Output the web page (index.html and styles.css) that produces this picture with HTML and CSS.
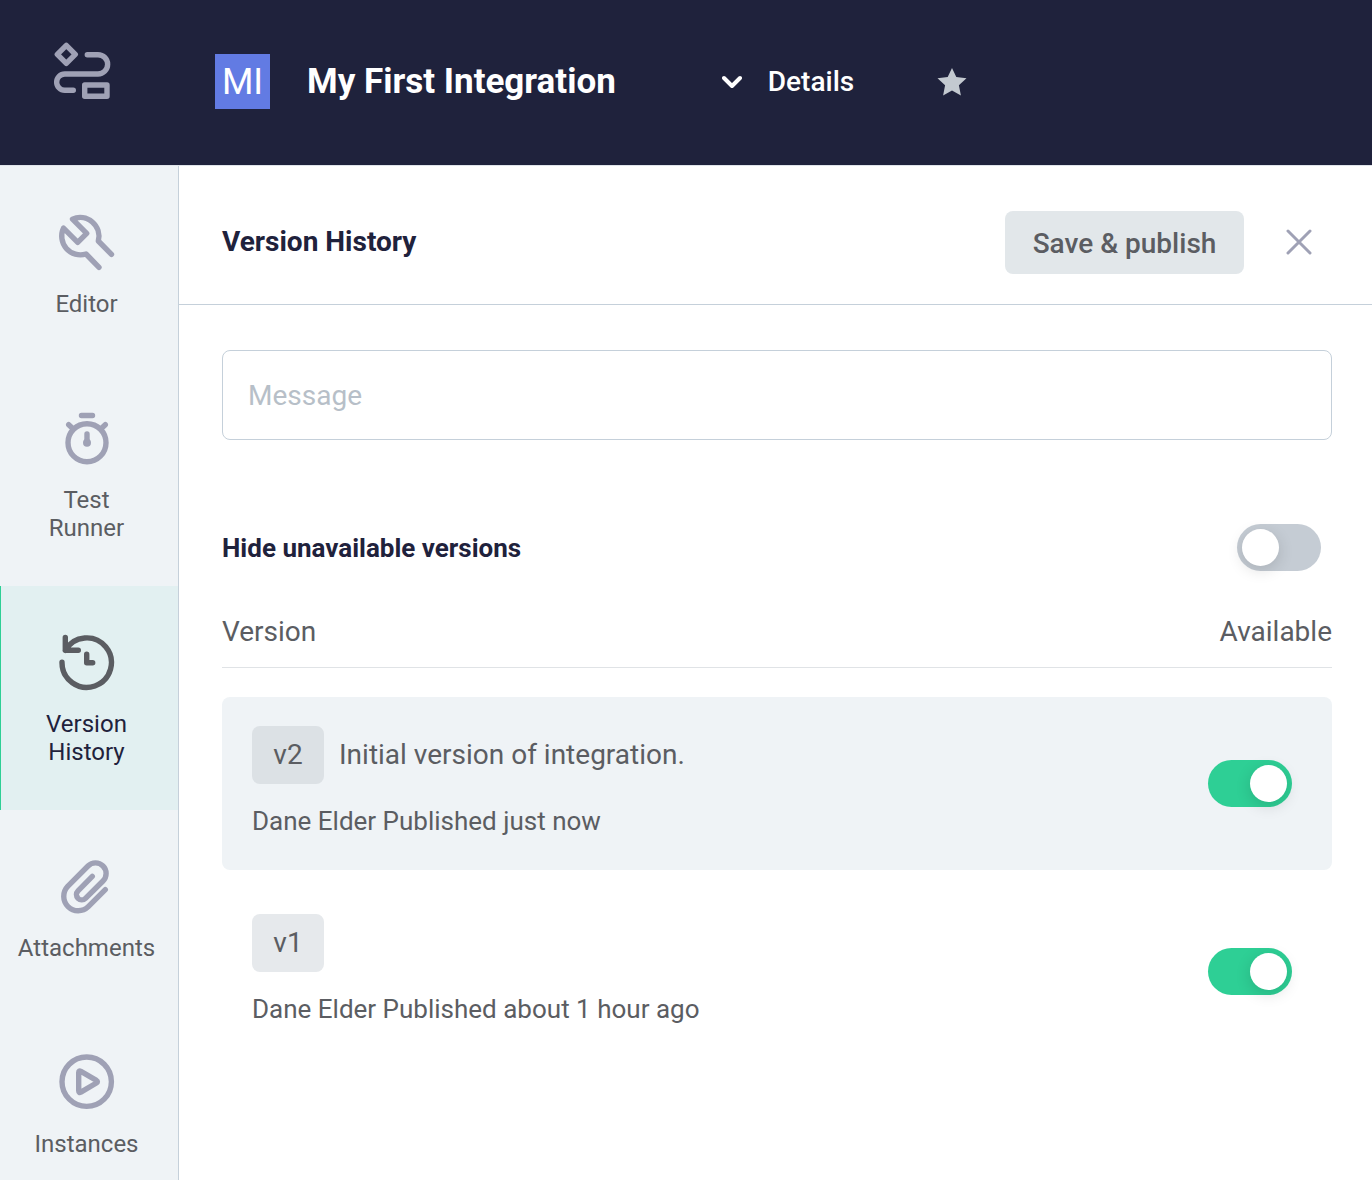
FILE: index.html
```html
<!DOCTYPE html>
<html lang="en">
<head>
<meta charset="utf-8">
<meta name="viewport" content="width=device-width, initial-scale=1">
<title>My First Integration</title>
<link rel="stylesheet" href="styles.css">
</head>
<body>
<div class="app">
  <header class="topbar">
    <a class="logo" href="#" aria-label="Home">
      <svg class="icon" viewBox="0 0 64 64"><path d="M16.3 7.3l9 9-9 9-9-9zM37.3 16.7H48a9.65 9.65 0 0 1 0 19.3H14.8a8.15 8.15 0 0 0 0 16.3h8.5M34.7 47H57v11.3H34.7z"/></svg>
    </a>
    <span class="avatar">MI</span>
    <h1 class="title">My First Integration</h1>
    <button class="details" type="button">
      <svg class="chevron" viewBox="0 0 20 14"><path d="M2 3l8 8 8-8"/></svg>
      Details
    </button>
    <button class="star" type="button" aria-label="Favorite">
      <svg class="star-icon" viewBox="0 0 30 28"><path d="M15 0l4.3 9 10.2 1.2-7.6 7 2 10.3L15 22.400l-8.900 5.100 2-10.300-7.600-7L10.700 9z"/></svg>
    </button>
  </header>

  <div class="body">
    <nav class="sidebar">
      <a class="nav-item" href="#">
        <svg class="icon" viewBox="0 0 64 64"><path d="M56.5 44.3L43.3 31A18.7 18.7 0 0 0 17.5 9.2L31.7 23.3l-9 9L8.5 18.2A18.7 18.7 0 0 0 31 44l13 13.3"/></svg>
        <span class="nav-label">Editor</span>
      </a>
      <a class="nav-item" href="#">
        <svg class="icon" viewBox="0 0 64 64"><circle cx="32" cy="36.7" r="19"/><path d="M26.5 9.5h11M13.7 18.7l3.5 3.3M50.3 18.7L46.8 22M32 28v8"/><circle class="dot" cx="32" cy="36.7" r="4"/></svg>
        <span class="nav-label">Test Runner</span>
      </a>
      <a class="nav-item active" href="#" aria-current="page">
        <svg class="icon" viewBox="0 0 64 64"><path d="M7 32.3A24.7 24.7 0 1 0 10.3 20.3M10.3 7.5v12.8h13M31.7 24.3v8.4h6"/></svg>
        <span class="nav-label">Version History</span>
      </a>
      <a class="nav-item" href="#">
        <svg class="icon" viewBox="0 0 64 64"><path d="M50.3 35.7l-17 17A14.5 14.5 0 0 1 12.7 32.3L33 12A10.6 10.6 0 0 1 48 27L30.5 44.3A5.3 5.3 0 0 1 23 36.8L37.3 22.3"/></svg>
        <span class="nav-label">Attachments</span>
      </a>
      <a class="nav-item" href="#">
        <svg class="icon" viewBox="0 0 64 64"><circle cx="31.7" cy="31.7" r="24.7"/><path d="M23.7 22.6v18.2q0 2.4 2.2 1.3l15.5-9.1q2-1.3 0-2.6L25.9 21.3q-2.2-1.1-2.2 1.3z"/></svg>
        <span class="nav-label">Instances</span>
      </a>
    </nav>

    <main class="panel">
      <div class="panel-head">
        <h2 class="panel-title">Version History</h2>
        <button class="save" type="button">Save &amp; publish</button>
        <button class="close" type="button" aria-label="Close">
          <svg class="close-icon" viewBox="0 0 26 26"><path d="M2 2l22 22M24 2L2 24"/></svg>
        </button>
      </div>
      <div class="panel-body">
        <input class="message" type="text" placeholder="Message" aria-label="Message">
        <div class="filter">
          <label class="filter-label" for="hide">Hide unavailable versions</label>
          <input class="toggle" type="checkbox" role="switch" id="hide">
        </div>
        <table class="versions">
          <thead>
            <tr class="versions-head"><th scope="col">Version</th><th scope="col">Available</th></tr>
          </thead>
          <tbody class="versions-list">
            <tr class="version current">
              <td class="version-info">
                <div class="version-line"><span class="chip">v2</span><span class="comment">Initial version of integration.</span></div>
                <div class="meta">Dane Elder Published just now</div>
              </td>
              <td><input class="toggle" type="checkbox" role="switch" aria-label="v2 available" checked></td>
            </tr>
            <tr class="version">
              <td class="version-info">
                <div class="version-line"><span class="chip">v1</span></div>
                <div class="meta">Dane Elder Published about 1 hour ago</div>
              </td>
              <td><input class="toggle" type="checkbox" role="switch" aria-label="v1 available" checked></td>
            </tr>
          </tbody>
        </table>
      </div>
    </main>
  </div>
</div>
</body>
</html>
```
FILE: styles.css
```css
* { box-sizing: border-box; }

body {
  margin: 0;
  font-family: Roboto, "Liberation Sans", sans-serif;
  font-size: 28px;
  line-height: 32px;
  color: #5b5d62;
  background: #fff;
}

button {
  padding: 0;
  border: 0;
  background: none;
  font: inherit;
  color: inherit;
  cursor: pointer;
}

a { color: inherit; text-decoration: none; }

h1, h2 { margin: 0; }

svg {
  display: block;
  fill: none;
  stroke: currentColor;
  stroke-linecap: round;
  stroke-linejoin: round;
}

.icon { width: 64px; height: 64px; stroke-width: 5.4; }

.app { display: flex; flex-direction: column; height: 100vh; }

/* Top bar */
.topbar {
  display: flex;
  align-items: center;
  flex: none;
  height: 166px;
  padding: 0 50px 2px;
  color: #fff;
  background: #1f223c;
  border-bottom: 1px solid #dfe4ea;
}

.logo { margin-bottom: 24px; color: #9fa1b5; }

.avatar {
  display: grid;
  place-items: center;
  width: 55px;
  height: 55px;
  margin-left: 101px;
  font-size: 36px;
  background: #627be3;
}

.title {
  margin-left: 37px;
  font-size: 35px;
  line-height: 40px;
  font-weight: 700;
}

.details {
  display: flex;
  align-items: center;
  gap: 26px;
  margin-left: 106px;
  font-weight: 500;
}

.chevron { width: 20px; height: 14px; stroke-width: 4; }
.star { margin-left: 83px; color: #c3c9d0; }
.star-icon { width: 30px; height: 28px; fill: currentColor; stroke: none; }

/* Sidebar */
.body { display: flex; flex: 1; min-height: 0; }

.sidebar {
  flex: none;
  width: 179px;
  overflow-y: auto;
  scrollbar-width: none;
  background: #eff3f6;
  border-right: 1px solid #c5d0da;
}

.nav-item {
  display: flex;
  flex-direction: column;
  align-items: center;
  gap: 16px;
  padding: 44px 6px 44px 0;
  border-left: 1px solid transparent;
  color: #9fa1b5;
}

.nav-label {
  width: min-content;
  font-size: 24px;
  line-height: 28px;
  text-align: center;
  color: #5b5d62;
}

.nav-item.active {
  color: #5b5d62;
  background: #e2f0f1;
  border-left-color: #2ecf95;
}

.active .nav-label { color: #1f223c; }

.dot { fill: currentColor; stroke: none; }

/* Panel */
.panel { flex: 1; min-width: 0; overflow-y: auto; }

.panel-head {
  display: flex;
  align-items: center;
  height: 139px;
  padding: 14px 60px 0 43px;
  border-bottom: 1px solid #c5d0da;
}

.panel-title {
  flex: 1;
  font-size: 28px;
  line-height: 32px;
  font-weight: 700;
  color: #1f223c;
}

.save {
  min-width: 239px;
  height: 63px;
  padding: 4px 24px 0;
  border-radius: 8px;
  font-weight: 500;
  background: #e2e7ea;
}

.close { margin-left: 42px; color: #9fa1b5; }
.close-icon { width: 26px; height: 26px; stroke-width: 3; }

.panel-body { padding: 45px 40px 40px 43px; }

.message {
  display: block;
  width: 100%;
  height: 90px;
  padding: 0 25px;
  border: 1px solid #c5d0da;
  border-radius: 8px;
  font: inherit;
  color: inherit;
}

.message::placeholder { color: #b7bfc8; opacity: 1; }

.filter {
  display: flex;
  align-items: center;
  justify-content: space-between;
  margin-top: 84px;
  padding-right: 11px;
}

.filter-label { font-size: 26px; font-weight: 700; color: #1f223c; }

/* Toggle switch */
.toggle {
  display: block;
  appearance: none;
  width: 84px;
  height: 47px;
  margin: 0;
  padding: 5px;
  border-radius: 24px;
  background: #c5ccd4;
  cursor: pointer;
}

.toggle::before {
  content: "";
  display: block;
  width: 37px;
  height: 37px;
  border-radius: 50%;
  background: #fff;
  box-shadow: 0 4px 16px rgba(0, 0, 0, 0.14);
}

.toggle:checked { background: #2ecf95; }
.toggle:checked::before { margin-left: auto; }

/* Version table */
.versions { display: block; margin-top: 45px; }
.versions thead { display: block; }

.versions-head {
  display: flex;
  justify-content: space-between;
  padding-bottom: 19px;
  border-bottom: 1px solid #e0e3e6;
}

.versions th,
.versions td { padding: 0; font-weight: 400; }

.versions-list {
  display: flex;
  flex-direction: column;
  gap: 15px;
  padding-top: 29px;
}

.version {
  display: flex;
  align-items: center;
  justify-content: space-between;
  padding: 0 40px 0 30px;
  border-radius: 8px;
}

.version.current { background: #eff3f6; }
.versions .version-info { padding: 29px 0 33px; }
.version-line { display: flex; align-items: center; gap: 15px; }

.chip {
  display: grid;
  place-items: center;
  width: 72px;
  height: 58px;
  border-radius: 8px;
  background: #e6e9ec;
}

.current .chip { background: #dce1e5; }
.meta { margin-top: 21px; font-size: 26px; }
```
